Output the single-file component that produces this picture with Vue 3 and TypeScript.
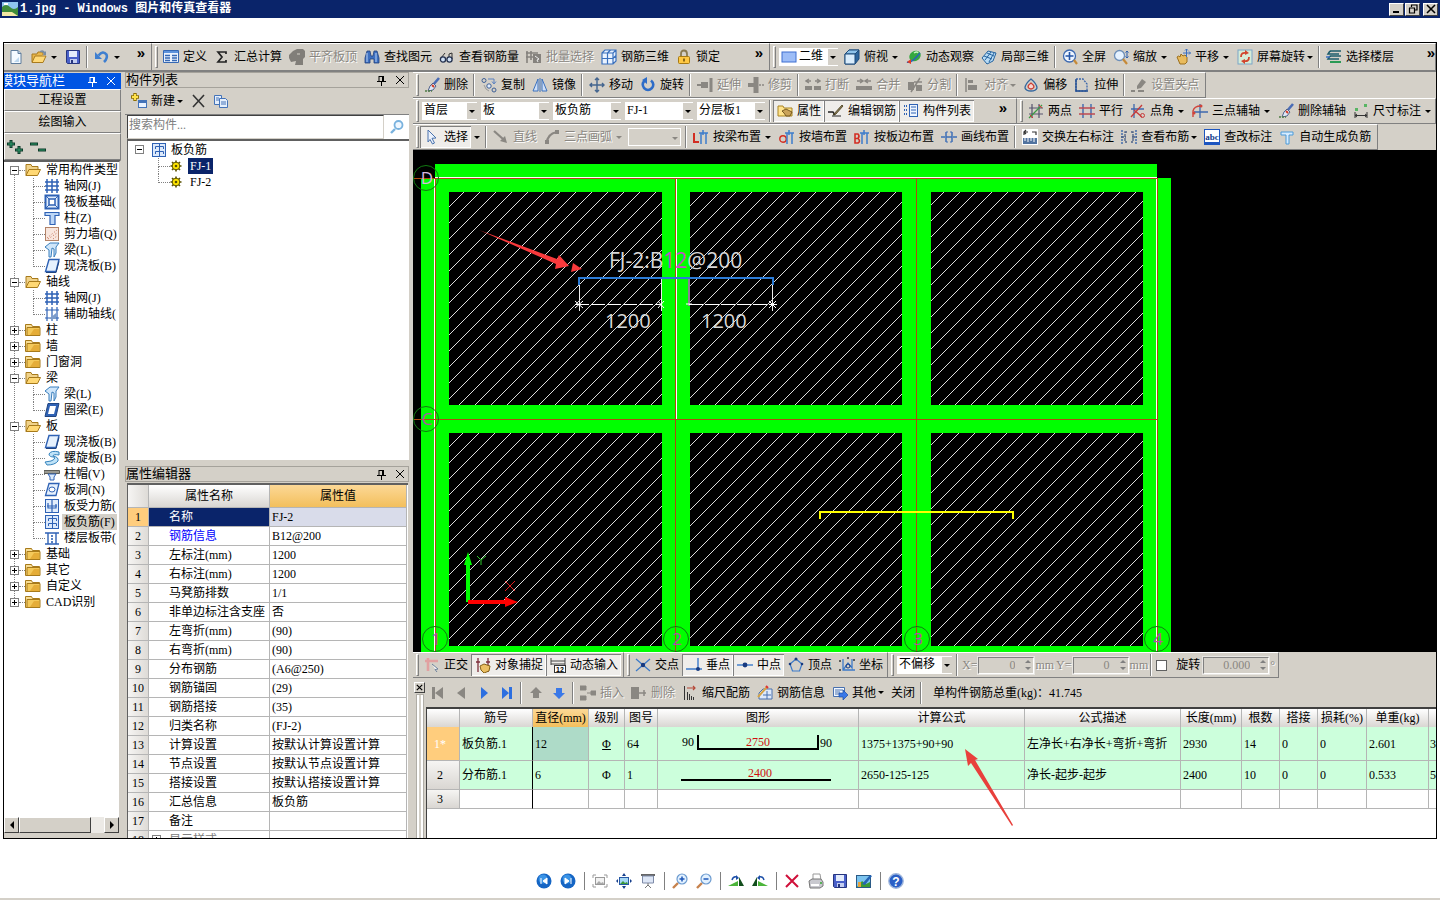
<script setup lang="ts">
import { h, type FunctionalComponent, type VNode } from 'vue'

type Kind = 'btn' | 'sep' | 'grip' | 'combo' | 'more' | 'drop'
interface Item {
  kind: Kind
  icon?: string
  label?: string
  off?: boolean
  on?: boolean
  arrow?: 'wide' | 'near'
  size?: string
}
interface Opt { off?: boolean; on?: boolean; arrow?: 'wide' | 'near' }
interface TreeNode { label: string; icon: string; open?: boolean; active?: boolean; children?: TreeNode[] }

const B = '#2f62b5'
const G = '#8a8782'
const icons: Record<string, string> = {
  fresh: '<path d="M3 1.5h7l3 3v10H3z" fill="#f4faff" stroke="#5f7d9c"/><path d="M10 1.5v3h3" fill="#b7cde2" stroke="#5f7d9c"/><path d="M11 8v5H6z" fill="#bcd7ee"/>',
  open: '<path d="M1 13V5h5l1-2h5v3" fill="#e9b64a" stroke="#a97b1e"/><path d="M1 13.5 4 7h11l-3 6.500z" fill="#ffd978" stroke="#a97b1e"/><path d="M9 2q3-2 5 1l1-1v4h-3l1-1q-1-2-4-2" fill="#7b8ea3"/>',
  save: '<path d="M1.500 1.500h13v13h-12l-1-1z" fill="#4960c9" stroke="#26357e"/><path d="M4 2h8v6H4z" fill="#e4ecfb"/><path d="M5 10h7v4H5z" fill="#c3cdf0"/><path d="M6 11h2v3H6z" fill="#26357e"/>',
  undo: '<path d="M4.500 6.500Q9 1 12.500 5.500 14 9 10 13" fill="none" stroke="#3f7fd0" stroke-width="2.600"/><path d="M1 3v7h7z" fill="#3f7fd0"/>',
  define: '<path d="M.5 1.500h15v12H.5z" fill="#eaf2fd" stroke="#3568b4"/><path d="M1 2h14v2H1z" fill="#5d93dc"/><path d="M2 6.500h5M2 9h5M2 11.500h5M9 6.500h5M9 9h5M9 11.500h5" stroke="#3568b4" stroke-width="1.300"/>',
  sigma: '<path d="M12 5V3H4l4 5-4 5h8v-2" fill="none" stroke="#222" stroke-width="1.700"/>',
  flush: '<path d="M0 9V6l4-4 4-2h6l2 2v6l-2 2v6H6l1-4-5 1z" fill="#817e79"/><path d="M8 5h3" stroke="#d4d0c8"/>',
  find: '<path d="M3 2h3l1 5h2l1-5h3l2 7v5h-5v-4H6v4H1V9z" fill="#3d6fc0" stroke="#213f7c" stroke-width=".8"/><path d="M3 4v9M12 4v9" stroke="#bcd4f4"/>',
  glasses: '<path d="M2 9 6 4M10 9V5l3-1v6" stroke="#333" fill="none"/><circle cx="4" cy="10.500" r="2.600" fill="#cfe0f5" stroke="#23304d" stroke-width="1.300"/><circle cx="10.500" cy="10.500" r="2.600" fill="#cfe0f5" stroke="#23304d" stroke-width="1.300"/>',
  batch: '<path d="M1 2v12M5 2v9M0 4h12M0 8h8" stroke="#85827d" stroke-width="1.600"/><path d="M7 5h8v9H7z" fill="#85827d"/><path d="m9 7 4 3-2 1 1 2" stroke="#eee" fill="none"/>',
  grid3d: '<path d="M1 4 4 1h11v11l-3 3H1V4h11v11M6.500 4v11M1 9.500h11M12 4l3-3M12 9.500l3-3M6.500 4l3-3" fill="#eaf3ff" stroke="#3a70bd" stroke-width="1.200"/>',
  lock: '<path d="M5 8V5q0-3.500 3-3.500T11 5v3" fill="none" stroke="#8a7a50" stroke-width="1.800"/><rect x="2.500" y="7.500" width="11" height="7" rx="1" fill="#ffc843" stroke="#a77a13"/><path d="M8 9.500v3" stroke="#6a4a07" stroke-width="1.500"/>',
  rect: '<rect x="1" y="3" width="14" height="10" fill="#9dbdf7" stroke="#3e6fd0"/>',
  cube: '<path d="m1 5 4-4h10v9l-4 5H1z" fill="#2e659c" stroke="#1d4b7a"/><path d="m1 5 4-4h10l-4 4z" fill="#8fc3ea" stroke="#1d4b7a"/><path d="M1 5h10v10H1z" fill="#d9ecfb" stroke="#1d4b7a"/>',
  orbit: '<ellipse cx="9" cy="7" rx="6" ry="5" fill="#36a83f" transform="rotate(-35 9 7)"/><path d="M1 13Q5 15 14 4" fill="none" stroke="#2b63b5" stroke-width="1.500"/><path d="M8 4q3-2 4 0" stroke="#c7f3c0" stroke-width="1.500" fill="none"/><path d="m1 13 4-3v5z" fill="#e33a24"/>',
  local3d: '<path d="m1 9 6-7 8 2-3 8-6 3z" fill="#b9dcf5" stroke="#25639e"/><path d="m4 11 6-8M8 13l5-9M3 7l8 3M6 4l7 3" stroke="#25639e" fill="none"/>',
  fit: '<circle cx="7.500" cy="7" r="6" fill="#eef5ff" stroke="#3c69b0" stroke-width="1.300"/><path d="M7.500 3v8M3.500 7h8" stroke="#2454a6" stroke-width="1.600"/><path d="m12 11 3 4" stroke="#c68a38" stroke-width="2.200"/>',
  zoomi: '<circle cx="6.500" cy="6.500" r="5" fill="#e6f2ff" stroke="#6d8fb9" stroke-width="1.300"/><path d="m10 10 4 5" stroke="#c68a38" stroke-width="2.200"/><path d="M14 2v7M12.500 3.500 14 2l1.500 1.500M12.500 7.500 14 9l1.500-1.500" stroke="#2a5fb0" fill="none"/>',
  pan: '<path d="M2 8q2-2 3 0l1-3 2 2 2-1 2 2v5l-2 2H5z" fill="#e9bb5d" stroke="#9b6f1e"/><path d="M11.500 0v8M8 4h7.500M10 1.500 11.500 0 13 1.500M14 2.500 15.500 4 14 5.500" stroke="#3b6fc0" fill="none"/>',
  turn: '<rect x="1" y="1" width="14" height="14" fill="#d6ecd8" stroke="#7aa6c8"/><path d="M4 8q0-5 5-4M12 8q0 5-5 4" fill="none" stroke="#d2452e" stroke-width="1.800"/><path d="m8 1 4 3-4 2zM8 15l-4-3 4-2z" fill="#d2452e"/>',
  floors: '<path d="M4 2h11M4 2l-2 3h11M4 7h11M4 7l-2 3h11" stroke="#1d5c6b" stroke-width="1.500" fill="none"/><path d="M4 13h11" stroke="#2a9a55" stroke-width="2"/><path d="M0 8h4" stroke="#3b6fc0" stroke-width="1.500"/>',
  brush: '<path d="m15 1-6 7" stroke="#4a6cb5" stroke-width="2.600"/><path d="m9 6 3 3-3 4-5 1 2-5z" fill="#dfe7f6" stroke="#51628c"/><path d="m8 8 2 2" stroke="#d43a22" stroke-width="2"/><path d="M1 14h7" stroke="#4d7b43" stroke-width="1.300" stroke-dasharray="2 1"/>',
  copy: '<circle cx="3" cy="3.500" r="2" fill="none" stroke="#3d5f96"/><circle cx="8" cy="9" r="2.200" fill="#e4eefb" stroke="#3d5f96"/><circle cx="13" cy="13" r="2" fill="none" stroke="#3d5f96"/><path d="M7 2h6v4M11 4.500 13 7l2-2.500" fill="none" stroke="#5b81c0"/><path d="m3 8 2 4 3 2" stroke="#999" fill="none"/>',
  mirror: '<path d="M6 2v12H1zM10 2v12h5z" fill="#cfe0f8" stroke="#3a70bd"/><path d="M8 1v14" stroke="#3a70bd"/>',
  move: '<path d="M8 1v14M1 8h14M6 3l2-2 2 2M6 13l2 2 2-2M3 6 1 8l2 2M13 6l2 2-2 2" fill="none" stroke="#44658f" stroke-width="1.400"/>',
  rotate: '<path d="M5 3.500q-4 3-1 7.500 4 4 8 0 3-4-1-7.500" fill="none" stroke="#2d6cc8" stroke-width="2.500"/><path d="M7 0v7L2 3z" fill="#2d6cc8"/>',
  extend: `<path d="M14 1v14" stroke="${G}" stroke-width="3"/><path d="M0 8h4" stroke="${G}" stroke-width="2"/><path d="M4 5h7v6H4z" fill="${G}"/>`,
  trim: `<path d="M8 0v16" stroke="${G}" stroke-width="5"/><path d="M11 8h5" stroke="${G}" stroke-width="1.500" stroke-dasharray="2 1"/><path d="M0 6h6v4H0z" fill="${G}"/>`,
  brk: `<path d="M0 11h16" stroke="${G}" stroke-width="4" stroke-dasharray="7 2"/><path d="M2 4h4M10 4h5M4 2 1 4l3 2M12 2l3 2-3 2" stroke="${G}" fill="none" stroke-width="1.500"/>`,
  merge: `<path d="M0 11h16" stroke="${G}" stroke-width="4"/><path d="M1 4h5M10 4h5M4 2l3 2-3 2M12 2 9 4l3 2" stroke="${G}" fill="none" stroke-width="1.500"/>`,
  split: `<path d="M1 5h6v8H1zM9 8h6v6H9z" fill="${G}"/><path d="m4 15 9-14M7 5h8" stroke="${G}" stroke-width="1.500"/>`,
  align: `<path d="M2 1v14" stroke="${G}" stroke-width="1.500"/><path d="M4 3h5v3H4zM4 8h9v5H4z" fill="${G}"/>`,
  offset: '<path d="M8 2q6 5 6 9-1 3-6 3t-6-3q0-4 6-9z" fill="none" stroke="#35679e" stroke-width="1.300"/><path d="M8 6q3 2 3 4-1 2-3 2t-3-2q0-2 3-4z" fill="#f9d7d2" stroke="#cc3e33" stroke-width="1.300"/>',
  stretch: '<path d="M2 14V2h7l4 5v7z" fill="none" stroke="#3b66ab" stroke-width="1.300" stroke-dasharray="2 1"/><path d="M2 2v12h12" fill="none" stroke="#234d91" stroke-width="1.400"/>',
  grips: `<path d="m6 9 5-7 4 3-5 6-4 1z" fill="${G}"/><path d="M0 14h4M7 14h6" stroke="${G}" stroke-width="1.800"/>`,
  prop: '<path d="M1 12V3h5l1 2h8v8H1z" fill="#ffe38c" stroke="#a98423"/><path d="m5 8 4-2 6 3-2 4H9L7 10z" fill="#caa35a" stroke="#5e430d" stroke-width=".8"/>',
  edit: '<path d="M0 9h5l2 3" stroke="#222" stroke-width="1.400" fill="none"/><path d="m5 12 9-10 1 1-7 8z" fill="#8a7d55" stroke="#443a1c" stroke-width=".8"/><path d="M4 13h9" stroke="#222"/>',
  list: '<path d="M1 3h3M1 7h3M1 11h3" stroke="#2f62b5" stroke-width="2" stroke-dasharray="1 1"/><rect x="6.500" y="1.500" width="8" height="12" fill="#eef5ff" stroke="#2f62b5"/><path d="M8 4h5M8 7h5M8 10h5" stroke="#2f62b5"/>',
  twopt: '<path d="M4 1v14M11 1v14M1 5h14M1 11h14" stroke="#56546e" stroke-width="1.200"/><path d="m1 15 13-13" stroke="#3c9a42" stroke-width="1.300"/><path d="m2 12 3 3M11 2l3 3" stroke="#d33"/>',
  parallel: '<path d="M4 1v14M12 1v14" stroke="#3e68ae" stroke-width="1.400"/><path d="M0 5h16M0 11h16" stroke="#bd4951" stroke-width="1.400"/>',
  angle: '<path d="M4 1v14M1 6h13" stroke="#3e68ae" stroke-width="1.300"/><path d="M1 14 12 2M4 7l8 7" stroke="#c73a3a" stroke-width="1.300"/><circle cx="12.500" cy="12.500" r="2" fill="none" stroke="#c73a3a"/>',
  three: '<path d="M8 1v14M2 9h14" stroke="#3e68ae" stroke-width="1.300"/><path d="M1 14V8q1-5 8-5" fill="none" stroke="#d0433a" stroke-width="1.400"/><circle cx="2" cy="10" r="1.500" fill="#d0433a"/><circle cx="9" cy="3" r="1.500" fill="#d0433a"/>',
  dim: '<path d="M2 9v6M14 9v6M2 12.500h12M4 11l-2 1.500L4 14M12 11l2 1.500-2 1.500" fill="none" stroke="#333"/><path d="M2 5h3v3H2zM11 1h3v3h-3z" fill="#58b563"/>',
  cursor: '<path d="m4 1 8 8-4 .3 2.500 4.700-2 1L6 10.500 4 13z" fill="#eaf1fc" stroke="#4a73ae"/>',
  line: `<path d="m1 2 9 8" stroke="${G}" stroke-width="2.200"/><path d="M14 14 7 12l5-5z" fill="${G}"/>`,
  arc: `<path d="M3 14Q3 5 13 3" fill="none" stroke="${G}" stroke-width="2.200"/><path d="M1 11h4v4H1zM11 1h4v4h-4z" fill="${G}"/>`,
  beam: '<path d="M1 4v9h5" fill="none" stroke="#d22d22" stroke-width="2"/><path d="M6 4h9M8 4v11M13 4v11M10 1v5" stroke="#3d7ccb" stroke-width="1.500"/>',
  wall: '<circle cx="4" cy="10" r="3.200" fill="none" stroke="#d22d22" stroke-width="1.400"/><path d="M6 4h9M8 4v11M13 4v11M10 1v5" stroke="#3d7ccb" stroke-width="1.500"/>',
  edge: '<path d="M1 5v9h3q3-2 0-4.500Q6 7 4 5zM1 9.500h3" fill="none" stroke="#d22d22" stroke-width="1.600"/><path d="M6 4h9M8 4v11M13 4v11M10 1v5" stroke="#3d7ccb" stroke-width="1.500"/>',
  drawline: '<path d="M5 3v10M11 3v10M0 8h4M5 8h6M12 8h4" stroke="#3e6fb7" stroke-width="1.500"/><path d="M5 3h2M9 3h2M5 13h2M9 13h2" stroke="#3e6fb7"/>',
  swap: '<path d="M0 0h16v16H0z" fill="#fff"/><path d="M2 6V3h4M14 6V3h-4M4 1 2 3l2 2" fill="none" stroke="#333" stroke-width="1.200"/><path d="M1 9h14v6H1z" fill="#51739f"/><path d="M3 9v3M6 9v4M9 9v3M12 9v4" stroke="#fff"/>',
  view: '<path d="M1 1v14M15 1v14" stroke="#3b66ab" stroke-dasharray="2 1" stroke-width="1.400"/><path d="M6 3H4v10h2M10 3h2v10h-2M0 8h5M11 8h5" fill="none" stroke="#4a5f85" stroke-width="1.300" stroke-dasharray="3 1"/>',
  abc: '<rect x=".5" y=".5" width="15" height="15" fill="#fff" stroke="#1d55c0"/><path d="M1 14h14" stroke="#1d55c0" stroke-width="2"/><text x="8" y="11" font-size="9" font-weight="bold" text-anchor="middle" font-family="Liberation Serif, serif" fill="#123a8c">abc</text>',
  tee: '<path d="M2 3h12v3h-4v9H7V6H2z" fill="#d7ecff" stroke="#4b9ad8"/>',
  ortho: '<path d="M4 1v13M1 4h13" stroke="#e1a1a1" stroke-width="2.600"/><path d="m8 7 6 5-3 .5 2 2.500" fill="#fff" stroke="#6b7f9b"/>',
  osnap: '<path d="M3 1v14M13 1v14M1 5h4M11 5h4" stroke="#7c2e3a" stroke-width="1.300"/><path d="m5 9 4-2 6 2-1 5-5 2-3-3z" fill="#eabf63" stroke="#856017"/>',
  dyn: '<path d="M1 1v7M15 1v7M1 4h14M1 7h14" stroke="#444"/><rect x="4.500" y="8.500" width="11" height="7" fill="#fff" stroke="#333"/><text x="10" y="15" font-size="7" font-weight="bold" text-anchor="middle" font-family="Liberation Sans, sans-serif">12</text>',
  cross: '<path d="m1 2 14 12M15 2 1 14" stroke="#3c7ac9" stroke-width="1.300"/><circle cx="8" cy="8" r="2.200" fill="#173a80"/>',
  perp: '<path d="M12 1v11M0 12h16" stroke="#3c7ac9" stroke-width="1.400"/><circle cx="12" cy="12" r="2" fill="#173a80"/>',
  mid: '<path d="M0 8h16" stroke="#3c7ac9" stroke-width="1.400"/><circle cx="8" cy="8" r="2.400" fill="#173a80"/>',
  vertex: '<path d="m8 2 6 5-2.500 7h-7L2 7z" fill="none" stroke="#3c7ac9" stroke-width="1.200"/><circle cx="8" cy="2" r="1.500" fill="#173a80"/><circle cx="2" cy="7" r="1.300" fill="#173a80"/><circle cx="14" cy="7" r="1.300" fill="#173a80"/>',
  coord: '<path d="M4 2v11h12M4 13l5-7 4 5V2" fill="none" stroke="#3c7ac9" stroke-width="1.300"/><path d="M0 4h2M0 13h2M8 1h2M14 3h2" stroke="#333" stroke-width="1.500"/><circle cx="9" cy="9" r="2" fill="none" stroke="#173a80"/>',
  first: `<path d="M2 2h3v12H2zM13 2v12L5 8z" fill="${G}"/>`,
  prev: `<path d="M12 2v12L4 8z" fill="${G}"/>`,
  next: '<path d="M5 2v12l7-6z" fill="#2d6fe0"/>',
  last: '<path d="M3 2v12l7-6zM10 2h3v12h-3z" fill="#2d6fe0"/>',
  up: `<path d="m8 2 6 6h-3v5H5V8H2z" fill="${G}"/>`,
  down: '<path d="m8 14 6-6h-3V3H5v5H2z" fill="#3a78e8"/>',
  insert: `<path d="M0 1h6v4H0zM0 11h6v4H0zM11 6h5v4h-5zM7 8h4" fill="${G}" stroke="${G}"/>`,
  remove: `<path d="M0 2h8v12H0z" fill="${G}"/><path d="M8 8h7M13 5v6" stroke="${G}" stroke-width="1.500"/>`,
  scale: '<path d="M5 3h8M11 1l2 2-2 2" fill="none" stroke="#b54737" stroke-width="1.200"/><path d="M2.500 1v14M5.500 7v8M7.500 9v6M9.500 11v4M11.500 12v3" stroke="#333"/>',
  info: '<path d="M6 4h9v10H2V8z" fill="#dfeafa" stroke="#4870ae"/><path d="m1 12 9-10" stroke="#d5a446" stroke-width="2"/><path d="M6 10h8M10 6v8" stroke="#4870ae"/><path d="m9 1 2 2" stroke="#d33" stroke-width="2"/>',
  other: '<path d="M1.500 2.500h11v9h-11z" fill="#f2f7ff" stroke="#4870ae"/><path d="M3 5h8M3 7h5M3 9h4" stroke="#4870ae"/><path d="M7 8h4V5l5 5-5 5v-3H7z" fill="#3a78e8" stroke="#1e4da3" stroke-width=".7"/>',
  folder: '<path d="M.5 2.500h6l1 2h7v9H.5z" fill="#f7dd95" stroke="#a77a1b"/><path d="M2 5.500h13v8H2z" fill="#f4c95a" stroke="#a77a1b"/><path d="M9 7h5v6H5z" fill="#e5ad38"/>',
  folderOpen: '<path d="M1 13.500V2.500h5l1 2h6v3" fill="#f0d28a" stroke="#a77a1b"/><path d="m1 13.500 3-6h11.500l-3 6z" fill="#ffd874" stroke="#a77a1b"/>',
  axis: `<path d="M3 1v14M8 1v14M13 1v14M1 4h14M1 8h14M1 12h14" stroke="${B}" stroke-width="1.500"/>`,
  raft: `<rect x="1.500" y="1.500" width="13" height="13" fill="#e3eefc" stroke="${B}" stroke-width="2"/><rect x="5" y="5" width="6" height="6" fill="#fff" stroke="${B}" stroke-width="1.500"/><path d="m2 2 3 3M14 2l-3 3M2 14l3-3M14 14l-3-3" stroke="${B}"/>`,
  column: `<path d="M1 2.500h14v3h-4v9H6v-9H1z" fill="#bcd6f6" stroke="${B}" stroke-width="1.200"/>`,
  shear: '<rect x="1.500" y="1.500" width="13" height="13" fill="#f8e6dd" stroke="#b38368"/><path d="M3 12 13 4M4 13l9-6M9 13l4-3" stroke="#c26b52" stroke-dasharray="1 2"/>',
  beamI: '<path d="M1 5 6 1h9l-3 4v6l-2 4V7L8 6l-1 9H5V8z" fill="#cfe6fa" stroke="#3a7fbd"/>',
  slab: `<path d="M5 1.500h10l-3 12H1.500z" fill="#e6f1fd" stroke="${B}" stroke-width="1.400"/><path d="M2 14.500h10l3-11" stroke="#214580" fill="none"/>`,
  aux: `<path d="M3 1v14M8 1v14M13 1v14M1 4h14M1 12h14" stroke="${B}" stroke-width="1.200"/><path d="m5 13 7-6v6z" fill="#7d9cc9"/>`,
  ring: `<path d="M4 1.500h11l-3 13H1z" fill="${B}" stroke="#214580"/><path d="M6 4h6l-2 8H4z" fill="#fff"/>`,
  spiral: '<path d="M15 2q-8-2-10 2 0 3 5 3 2 2-3 4l-6 1 2 3q8 0 11-4 1-4-5-5 0-2 6-1z" fill="#bfe3f8" stroke="#3583bd"/>',
  cap: '<path d="M0 4.500h15.500v3H0z" fill="#9a9a92" stroke="#5e5e58"/><path d="m4 8 2 3v3h4v-3l2-3z" fill="#dcebfb" stroke="#2f62b5"/>',
  hole: `<path d="M5 1.500h10l-3 12H1.500z" fill="#e6f1fd" stroke="${B}" stroke-width="1.300"/><ellipse cx="8" cy="7.500" rx="3" ry="2.500" fill="#fff" stroke="${B}"/>`,
  rebar: `<rect x="1.500" y="1.500" width="13" height="13" fill="#e3eefc" stroke="${B}"/><path d="M8 2v12M3 8h10M4 5v5h8V6" fill="none" stroke="${B}" stroke-width="1.200"/>`,
  neg: `<rect x="1.500" y="1.500" width="13" height="13" fill="#dce9fb" stroke="${B}"/><path d="M8.500 2v12M4.500 7V4.500h8V7M4.500 12V9.500h8V12" fill="none" stroke="${B}"/>`,
  strip: `<path d="M1 3h14M1 14h14M4 3v11M12 3v11" stroke="${B}" stroke-width="1.400"/><path d="M8 5v8" stroke="${B}" stroke-dasharray="2 1" stroke-width="1.600"/>`,
  gear: '<path d="M8 2.500v11M2.500 8h11M4 4l8 8M12 4l-8 8" stroke="#5b5200" stroke-width="1.600"/><circle cx="8" cy="8" r="3.800" fill="#ffe500" stroke="#5b5200"/><circle cx="8" cy="8" r="1.300" fill="#5b5200"/>',
  addnew: '<path d="M4 0v8M0 4h8" stroke="#8f7100" stroke-width="3.400"/><path d="M4 1v6M1 4h6" stroke="#ffe14a" stroke-width="2"/><rect x="7.500" y="7.500" width="8" height="7" fill="#eaf3ff" stroke="#4473b8"/><path d="M8 9h7" stroke="#4473b8" stroke-width="2"/>',
  cut: '<path d="m3 2 11 12M14 2 3 14" stroke="#333" stroke-width="1.600"/>',
  docs: '<path d="M1.500 2.500h7v9h-7z" fill="#e5effc" stroke="#4473b8"/><path d="M6.500 5.500h6l2 2v7h-8z" fill="#e5effc" stroke="#4473b8"/><path d="M3 5h3M3 7h3M8 9h5M8 11h5" stroke="#4473b8"/>',
  search: '<circle cx="9.500" cy="6" r="4" fill="#eff7ff" stroke="#79b2de" stroke-width="1.800"/><path d="m6 10-4 4" stroke="#79b2de" stroke-width="2.400"/>',
  pin: '<path d="M5 4v5M5 4.500h4M3 9.500h9M7.500 10v4" stroke="currentColor" fill="none"/><path d="M9 4v5" stroke="currentColor" stroke-width="2"/>',
  close: '<path d="m4 4 8 8M12 4l-8 8" stroke="currentColor" fill="none"/>',
  plusplus: '<path d="M4 1v8M0 5h8M12 7v8M8 11h8" stroke="#0e3a2a" stroke-width="3"/><path d="M4 2v6M1 5h6M12 8v6M9 11h6" stroke="#2f9c6b"/>',
  minus: '<path d="M0 5h8M8 11h8" stroke="#0e3a2a" stroke-width="3"/><path d="M1 5h6M9 11h6" stroke="#2f9c6b"/>',
  picture: '<path d="M0 1h16v14H0z" fill="#8fc4ee"/><path d="M0 6q4-4 8 0t8 0v9H0z" fill="#3f8c3a"/><path d="M0 11h10l6 4H0z" fill="#f1e7a4"/><path d="M2 2h4v2H2z" fill="#fff"/>',
  ballPrev: '<circle cx="8" cy="8" r="7.500" fill="#1565c4"/><circle cx="7" cy="6" r="4.500" fill="#3a93e6"/><path d="M5 5v6M11 5v6L7 8z" stroke="#fff" fill="#fff"/>',
  ballNext: '<circle cx="8" cy="8" r="7.500" fill="#1565c4"/><circle cx="7" cy="6" r="4.500" fill="#3a93e6"/><path d="M11 5v6M5 5v6l4-3z" stroke="#fff" fill="#fff"/>',
  actual: '<path d="M1 5V2h3M12 2h3v3M15 11v3h-3M4 14H1v-3" fill="none" stroke="#999"/><rect x="3.500" y="4.500" width="9" height="7" fill="#f2f2f2" stroke="#999"/><path d="m4 11 3-3 2 2 2-1 1 2z" fill="#aaa"/>',
  best: '<rect x="3.500" y="4.500" width="9" height="7" fill="#a6d8f5" stroke="#2759a5"/><path d="m4 11 3-3 2 2 2-1 1 2z" fill="#3d9a3a"/><path d="M6 3h4L8 0zM6 13h4l-2 3zM2 6v4L0 8zM14 6v4l2-2z" fill="#163f8c"/>',
  slide: '<path d="M1 2h14" stroke="#666" stroke-width="2"/><path d="M2.500 3h11v7h-11z" fill="#dde6f6" stroke="#7e8ba8"/><path d="M8 10v3M5 15l3-3 3 3" stroke="#777" fill="none"/>',
  zin: '<path d="m6 10-5 5" stroke="#c7824d" stroke-width="2.400"/><circle cx="10" cy="6" r="5" fill="#e2f1ff" stroke="#6c9bd0" stroke-width="1.200"/><path d="M10 3.500v5M7.500 6h5" stroke="#1c56b8" stroke-width="1.500"/>',
  zout: '<path d="m6 10-5 5" stroke="#c7824d" stroke-width="2.400"/><circle cx="10" cy="6" r="5" fill="#e2f1ff" stroke="#6c9bd0" stroke-width="1.200"/><path d="M7.500 6h5" stroke="#1c56b8" stroke-width="1.500"/>',
  rleft: '<path d="M11 13V4l5 9z" fill="#124d1c"/><path d="m0 13 10-5v5z" fill="#4cb53a"/><path d="M4 7q1-4 5-3" stroke="#1c4fa8" fill="none" stroke-width="1.500"/><path d="m8 2 3 3-3 2z" fill="#1c4fa8"/>',
  rright: '<path d="M5 13V4l-5 9z" fill="#124d1c"/><path d="M16 13 6 8v5z" fill="#4cb53a"/><path d="M12 7q-1-4-5-3" stroke="#1c4fa8" fill="none" stroke-width="1.500"/><path d="M8 2 5 5l3 2z" fill="#1c4fa8"/>',
  redx: '<path d="m2 2 12 12M14 2 2 14" stroke="#d0103a" stroke-width="2"/>',
  print: '<path d="M5 1h7l1 6H5z" fill="#fff" stroke="#999"/><path d="m1 8 3-2h9l2 3v4l-3 2H2z" fill="#c9c9cf" stroke="#777"/><path d="M3 12h8" stroke="#fff" stroke-width="2"/><path d="M12 10h2" stroke="#3a3" stroke-width="1.500"/>',
  editpic: '<rect x=".5" y="2.500" width="14" height="12" fill="#7cc4ef" stroke="#2a5a86"/><path d="m1 14 5-6 4 3 4-2v5z" fill="#3b9a36"/><path d="m6 11 8-9 2 1-7 9z" fill="#2563b5"/><path d="M2 9h3v5H2z" fill="#e8a33a"/>',
  help: '<circle cx="8" cy="8" r="7.200" fill="#2a5fc6" stroke="#9fb6dc" stroke-width="1.400"/><text x="8" y="12.500" font-size="12" font-weight="bold" fill="#fff" text-anchor="middle" font-family="Liberation Sans, sans-serif">?</text>',
}

const b = (icon: string, label = '', o: Opt = {}): Item => ({ kind: 'btn', icon, label, ...o })
const sep: Item = { kind: 'sep' }
const grip: Item = { kind: 'grip' }
const more: Item = { kind: 'more' }
const drop: Item = { kind: 'drop' }
const combo = (label: string, size = 'mid', icon = ''): Item => ({ kind: 'combo', label, size, icon })

const glyph = (name: string): VNode =>
  h('svg', { class: 'ico', viewBox: '0 0 16 16', 'aria-hidden': 'true', innerHTML: icons[name] })

const Tools: FunctionalComponent<{ items: Item[] }> = (props) =>
  props.items.map((it) => {
    if (it.kind === 'sep') return h('span', { class: 'tb-sep' })
    if (it.kind === 'grip') return h('span', { class: 'tb-grip' })
    if (it.kind === 'more') return h('button', { class: 'tb-more', 'aria-label': '更多' }, '»')
    if (it.kind === 'drop') return h('button', { class: 'tb-drop', 'aria-label': '展开' }, [h('i', { class: 'tri' })])
    if (it.kind === 'combo')
      return h('span', { class: ['tb-combo', it.size] }, [
        it.icon ? glyph(it.icon) : null,
        h('select', { 'aria-label': it.label || '选项', disabled: it.size === 'blank' }, [h('option', it.label)]),
        h('i', { class: 'tri' }),
      ])
    return h(
      'button',
      { class: ['tb-btn', { on: it.on }], disabled: it.off, 'aria-label': it.label || it.icon },
      [
        it.icon ? glyph(it.icon) : null,
        it.label ? h('span', it.label) : null,
        it.arrow ? h('i', { class: ['tri', it.arrow] }) : null,
      ],
    )
  })
Tools.props = ['items']

const wide: Opt = { arrow: 'wide' }
const off: Opt = { off: true }
const on: Opt = { on: true }

const fileBand = [b('fresh'), b('open', '', wide), b('save'), sep, b('undo', '', wide), more]
const mainBand = [grip, b('define', '定义'), b('sigma', '汇总计算'), b('flush', '平齐板顶', off), b('find', '查找图元'), b('glasses', '查看钢筋量'), b('batch', '批量选择', off), b('grid3d', '钢筋三维'), b('lock', '锁定'), more]
const viewBand = [grip, combo('二维', 'view', 'rect'), b('cube', '俯视', wide), b('orbit', '动态观察'), b('local3d', '局部三维'), sep, b('fit', '全屏'), b('zoomi', '缩放', wide), b('pan', '平移', wide), b('turn', '屏幕旋转', { arrow: 'near' }), sep, b('floors', '选择楼层'), more]
const editBand = [grip, b('brush', '删除'), sep, b('copy', '复制'), b('mirror', '镜像'), sep, b('move', '移动'), b('rotate', '旋转'), sep, b('extend', '延伸', off), b('trim', '修剪', off), sep, b('brk', '打断', off), b('merge', '合并', off), b('split', '分割', off), sep, b('align', '对齐', { off: true, arrow: 'near' }), b('offset', '偏移'), b('stretch', '拉伸'), sep, b('grips', '设置夹点', off)]
const pickBand = [grip, combo('首层', 'small'), combo('板'), combo('板负筋'), combo('FJ-1'), combo('分层板1'), sep, b('prop', '属性', on), b('edit', '编辑钢筋', on), b('list', '构件列表', on), more]
const axisBand = [grip, b('twopt', '两点'), b('parallel', '平行'), b('angle', '点角', wide), b('three', '三点辅轴', wide), b('brush', '删除辅轴'), b('dim', '尺寸标注', wide)]
const drawBand = [grip, b('cursor', '选择', on), drop, sep, b('line', '直线', off), b('arc', '三点画弧', { off: true, arrow: 'wide' }), combo('', 'blank'), sep, b('beam', '按梁布置', wide), b('wall', '按墙布置'), b('edge', '按板边布置'), b('drawline', '画线布置'), sep, b('swap', '交换左右标注'), b('view', '查看布筋', { arrow: 'near' }), b('abc', '查改标注'), b('tee', '自动生成负筋')]
const snapBand = [grip, b('ortho', '正交'), b('osnap', '对象捕捉', on), b('dyn', '动态输入', on)]
const pointBand = [grip, b('cross', '交点'), b('perp', '垂点', on), b('mid', '中点', on), b('vertex', '顶点'), b('coord', '坐标')]
const offsetBand = [grip, combo('不偏移', 'small'), sep]
const rowBand = [b('first', '', off), b('prev', '', off), b('next'), b('last'), sep, b('up', '', off), b('down'), sep, b('insert', '插入', off), b('remove', '删除', off), b('scale', '缩尺配筋'), b('info', '钢筋信息'), b('other', '其他', { arrow: 'near' }), b('', '关闭'), sep]
const partBand = [b('addnew', '新建', { arrow: 'near' }), b('cut'), b('docs')]

const n = (icon: string, label: string, active = false): TreeNode => ({ icon, label, active })
const tree: TreeNode[] = [
  { label: '常用构件类型', icon: 'folderOpen', open: true, children: [n('axis', '轴网(J)'), n('raft', '筏板基础('), n('column', '柱(Z)'), n('shear', '剪力墙(Q)'), n('beamI', '梁(L)'), n('slab', '现浇板(B)')] },
  { label: '轴线', icon: 'folderOpen', open: true, children: [n('axis', '轴网(J)'), n('aux', '辅助轴线(')] },
  n('folder', '柱'),
  n('folder', '墙'),
  n('folder', '门窗洞'),
  { label: '梁', icon: 'folderOpen', open: true, children: [n('beamI', '梁(L)'), n('ring', '圈梁(E)')] },
  { label: '板', icon: 'folderOpen', open: true, children: [n('slab', '现浇板(B)'), n('spiral', '螺旋板(B)'), n('cap', '柱帽(V)'), n('hole', '板洞(N)'), n('rebar', '板受力筋('), n('neg', '板负筋(F)', true), n('strip', '楼层板带(')] },
  n('folder', '基础'),
  n('folder', '其它'),
  n('folder', '自定义'),
  n('folder', 'CAD识别'),
]

const attrs: [string, string][] = [
  ['名称', 'FJ-2'], ['钢筋信息', 'B12@200'], ['左标注(mm)', '1200'], ['右标注(mm)', '1200'], ['马凳筋排数', '1/1'],
  ['非单边标注含支座', '否'], ['左弯折(mm)', '(90)'], ['右弯折(mm)', '(90)'], ['分布钢筋', '(A6@250)'], ['钢筋锚固', '(29)'],
  ['钢筋搭接', '(35)'], ['归类名称', '(FJ-2)'], ['计算设置', '按默认计算设置计算'], ['节点设置', '按默认节点设置计算'],
  ['搭接设置', '按默认搭接设置计算'], ['汇总信息', '板负筋'], ['备注', ''],
]

const heads = ['筋号', '直径(mm)', '级别', '图号', '图形', '计算公式', '公式描述', '长度(mm)', '根数', '搭接', '损耗(%)', '单重(kg)', '']
const cols = ['c33', 'c73', 'c56', 'c36', 'c33', 'c201', 'c166', 'c156', 'c61', 'c38', 'c38', 'c49', 'c62', '']

const viewerTools: string[][] = [['ballPrev', 'ballNext'], ['actual', 'best', 'slide'], ['zin', 'zout'], ['rleft', 'rright'], ['redx', 'print', 'save', 'editpic'], ['help']]

const cellX = [449, 690, 931]
const cellY = [192, 433]
const hatch = Array.from({ length: 75 }, (_, i) => {
  const c = 656 + i * 16
  return `M${c - 192} 192L${c - 646} 646`
}).join('')
const bubbles = [
  { x: 426, y: 178, t: 'D' }, { x: 426, y: 419, t: 'C' }, { x: 435, y: 639, t: '1' },
  { x: 676, y: 639, t: '2' }, { x: 917, y: 639, t: '3' }, { x: 1157, y: 639, t: '4' },
]
</script>

<template>
  <div class="viewer">
    <header class="title">
      <svg class="ico" viewBox="0 0 16 16" v-html="icons.picture" />
      <h1>1.jpg - Windows <span>图片和传真查看器</span></h1>
      <div class="winbtns">
        <button aria-label="最小化"><svg viewBox="0 0 10 10"><path d="M1 8h6" stroke="#000" stroke-width="2" /></svg></button>
        <button aria-label="还原"><svg viewBox="0 0 10 10"><path d="M3.500 1v2M3 1h6v5H7M1 4h6M1.500 4v5h5V4" fill="none" stroke="#000" stroke-width="1.200" /></svg></button>
        <button aria-label="关闭"><svg viewBox="0 0 10 10"><path d="m1 1 8 8M9 1 1 9" stroke="#000" stroke-width="1.600" /></svg></button>
      </div>
    </header>

    <main class="shot">
      <div class="row top">
        <div class="band file"><Tools :items="fileBand" /></div>
        <div class="band main"><Tools :items="mainBand" /></div>
        <div class="band grow"><Tools :items="viewBand" /></div>
      </div>

      <div class="work">
        <nav class="nav">
          <div class="cap blue"><span class="clip">模块导航栏</span><svg class="ico" viewBox="0 0 16 16" v-html="icons.pin" /><svg class="ico" viewBox="0 0 16 16" v-html="icons.close" /></div>
          <button class="navbtn">工程设置</button>
          <button class="navbtn">绘图输入</button>
          <div class="fold">
            <button aria-label="全部展开"><svg class="ico" viewBox="0 0 16 16" v-html="icons.plusplus" /></button>
            <button aria-label="全部折叠"><svg class="ico" viewBox="0 0 16 16" v-html="icons.minus" /></button>
          </div>
          <div class="treebox">
            <ul class="tree">
              <li v-for="(g, i) in tree" :key="i">
                <div class="node"><i class="exp" :class="{ plus: !g.open }" /><i class="dots" /><svg class="ico" viewBox="0 0 16 16" v-html="icons[g.icon]" /><span>{{ g.label }}</span></div>
                <ul v-if="g.children">
                  <li v-for="c in g.children" :key="c.label" class="leaf"><svg class="ico" viewBox="0 0 16 16" v-html="icons[c.icon]" /><span :class="{ active: c.active }">{{ c.label }}</span></li>
                </ul>
              </li>
            </ul>
          </div>
          <div class="hscroll"><button aria-label="向左"><i class="tri left" /></button><span class="thumb" /><span class="track" /><button aria-label="向右"><i class="tri right" /></button></div>
        </nav>

        <section class="side">
          <div class="cap"><span class="clip">构件列表</span><svg class="ico" viewBox="0 0 16 16" v-html="icons.pin" /><svg class="ico" viewBox="0 0 16 16" v-html="icons.close" /></div>
          <div class="partbar"><Tools :items="partBand" /></div>
          <div class="find"><input type="text" placeholder="搜索构件..." aria-label="搜索构件" /><button aria-label="搜索"><svg class="ico" viewBox="0 0 16 16" v-html="icons.search" /></button></div>
          <div class="parts">
            <div class="node"><i class="exp" /><svg class="ico" viewBox="0 0 16 16" v-html="icons.neg" /><span>板负筋</span></div>
            <ul>
              <li class="leaf"><svg class="ico" viewBox="0 0 16 16" v-html="icons.gear" /><span class="sel">FJ-1</span></li>
              <li class="leaf"><svg class="ico" viewBox="0 0 16 16" v-html="icons.gear" /><span>FJ-2</span></li>
            </ul>
          </div>
          <div class="cap"><span class="clip">属性编辑器</span><svg class="ico" viewBox="0 0 16 16" v-html="icons.pin" /><svg class="ico" viewBox="0 0 16 16" v-html="icons.close" /></div>
          <div class="propbox">
            <table class="props">
              <thead><tr><th class="num" /><th class="name">属性名称</th><th class="hot">属性值</th></tr></thead>
              <tbody>
                <tr v-for="(p, i) in attrs" :key="i" :class="{ cur: i === 0, key: i === 1 }"><th class="num">{{ i + 1 }}</th><td class="name">{{ p[0] }}</td><td>{{ p[1] }}</td></tr>
                <tr class="group"><th class="num">18</th><td class="name"><i class="exp plus" />显示样式</td><td /></tr>
              </tbody>
            </table>
          </div>
        </section>

        <section class="right">
          <div class="row"><div class="band"><Tools :items="editBand" /></div></div>
          <div class="row"><div class="band pick"><Tools :items="pickBand" /></div><div class="band grow"><Tools :items="axisBand" /></div></div>
          <div class="row"><div class="band"><Tools :items="drawBand" /></div></div>

          <div class="canvas">
            <svg viewBox="413 150 1023 502" preserveAspectRatio="xMinYMin slice">
              <defs>
                <clipPath id="cells"><template v-for="y in cellY" :key="y"><rect v-for="x in cellX" :key="x" :x="x" :y="y" :width="x === 690 ? 212 : 213" height="213" /></template></clipPath>
              </defs>
              <path :d="hatch" clip-path="url(#cells)" stroke="#dcdcdc" stroke-width="1" shape-rendering="crispEdges" fill="none" />
              <path d="M435 164h722v28H435zM421 178h28v474h-28zM662 178h28v474h-28zM902 178h29v474h-29zM1143 178h28v474h-28zM421 405h750v28H421zM421 646h750v6H421z" fill="#00ff00" />
              <g shape-rendering="crispEdges" fill="none">
                <path d="M435 177.500h722M434.500 178v474M676.500 178v241M1156.500 178v474" stroke="#fff" />
                <path d="M413 178.500h744M435.500 178v474M675.500 178v474M916.500 178v474M1157.500 178v474M413 419.500h744" stroke="#b04a10" />
              </g>
              <g fill="none" stroke="#117a11"><circle v-for="c in bubbles" :key="c.t" :cx="c.x" :cy="c.y" r="12.500" /></g>
              <text v-for="c in bubbles" :key="c.t" :x="c.x + 1" :y="c.y + 6" class="bub" :class="{ pale: c.t === 'D' }">{{ c.t }}</text>

              <text x="609" y="268" class="cad big">FJ-2:B<tspan fill="#c050c8">12</tspan>@200</text>
              <text x="605" y="328" class="cad">1200</text>
              <text x="701" y="328" class="cad">1200</text>
              <path d="M579.500 285v26M661.500 279v32M772.500 285v26" stroke="#eee" fill="none" />
              <path d="M689 279v27" stroke="#c050c8" fill="none" stroke-width="1.500" />
              <path d="M575 304.500h87M689 304.500h88" stroke="#fff" stroke-dasharray="14 2" />
              <path d="m575 301 8 7M583 301l-8 7M658 301l6 7M664 301l-6 7M769 301l7 7M776 301l-7 7M686 304h6" stroke="#fff" />
              <path d="M579 285v-7h194v7" fill="none" stroke="#2b7bd6" stroke-width="2" />
              <path d="m479 230 78 29 2-4 10 11-14 3 1-5z" fill="#f8393c" />
              <path d="m573 263 9 6-11 3z" fill="#f8393c" />
              <path d="M820 519v-7h193v7" fill="none" stroke="#ffff00" stroke-width="2" />
              <path d="M468 602v-40" stroke="#00ff00" stroke-width="4" /><path d="m468 552 4 13h-8z" fill="#00ff00" />
              <path d="M468 602h40" stroke="#f00" stroke-width="4" /><path d="m518 602-13-5v10z" fill="#f00" />
              <path d="m477 556 4 4 5-4M481 560v5" stroke="#2bc42b" fill="none" /><path d="m505 581 10 10M515 581l-10 10" stroke="#e22020" />
            </svg>
          </div>

          <div class="row">
            <div class="band snap"><Tools :items="snapBand" /></div>
            <div class="band point"><Tools :items="pointBand" /></div>
            <div class="band offs">
              <Tools :items="offsetBand" />
              <label class="dis">X=<span class="spin"><input type="text" value="0" disabled /><i class="ud" /></span>mm</label>
              <label class="dis">Y=<span class="spin"><input type="text" value="0" disabled /><i class="ud" /></span>mm</label>
              <Tools :items="[sep]" />
              <label class="chk"><input type="checkbox" />旋转</label>
              <label class="dis"><span class="spin long"><input type="text" value="0.000" disabled aria-label="旋转角度" /><i class="ud" /></span>°</label>
            </div>
          </div>

          <div class="dock">
            <div class="gutter"><button aria-label="关闭"><svg viewBox="0 0 10 10"><path d="m2 2 6 6M8 2 2 8" stroke="#000" stroke-width="1.300" /></svg></button><span /></div>
            <div class="sheet">
              <div class="rowbar"><Tools :items="rowBand" /><span class="total">单构件钢筋总重(kg)：41.745</span></div>
              <div class="gridbox">
                <table class="grid">
                  <colgroup><col v-for="(c, i) in cols" :key="i" :class="c" /></colgroup>
                  <thead><tr><th /><th v-for="(t, i) in heads" :key="i" :class="{ hot: i === 1 }">{{ t }}</th></tr></thead>
                  <tbody>
                    <tr class="g r1">
                      <th class="cur">1*</th><td>板负筋.1</td><td class="cell">12</td><td class="mid"><u>Φ</u></td><td>64</td>
                      <td class="shape"><svg viewBox="0 0 200 33"><path d="M40 8v14h120V8" fill="none" stroke="#000" stroke-width="2" /><text x="24" y="19">90</text><text x="162" y="20">90</text><text x="88" y="19" class="red">2750</text></svg></td>
                      <td>1375+1375+90+90</td><td>左净长+右净长+弯折+弯折</td><td>2930</td><td>14</td><td>0</td><td>0</td><td>2.601</td><td>3</td>
                    </tr>
                    <tr class="g r2">
                      <th>2</th><td>分布筋.1</td><td>6</td><td class="mid">Φ</td><td>1</td>
                      <td class="shape"><svg viewBox="0 0 200 28"><path d="M23 19h150" stroke="#000" stroke-width="2" /><text x="90" y="16" class="red">2400</text></svg></td>
                      <td>2650-125-125</td><td>净长-起步-起步</td><td>2400</td><td>10</td><td>0</td><td>0</td><td>0.533</td><td>5</td>
                    </tr>
                    <tr class="r3"><th>3</th><td v-for="i in 13" :key="i" /></tr>
                  </tbody>
                </table>
                <svg class="pointer" viewBox="0 0 50 80"><path d="M1 0 14 10l-3 1 38 65-1 1L7 14l-3 3z" fill="#e8403c" /></svg>
              </div>
            </div>
          </div>
        </section>
      </div>
    </main>

    <footer class="foot">
      <div v-for="(g, i) in viewerTools" :key="i" class="fgroup"><button v-for="t in g" :key="t" :aria-label="t"><svg class="ico" viewBox="0 0 16 16" v-html="icons[t]" /></button></div>
    </footer>
  </div>
</template>

<style>
body { margin: 0; background: #fff; }
.viewer, .viewer button, .viewer input, .viewer select { font-family: "Liberation Serif", "Noto Sans CJK SC", serif; font-size: 12px; line-height: 16px; color: #000; }
.viewer button { border: 0; background: none; padding: 0; color: inherit; }
.viewer * { box-sizing: border-box; }
.ico { width: 16px; height: 16px; flex: none; display: block; }
.tri { flex: none; width: 0; height: 0; border: 3px solid transparent; border-top-color: currentColor; border-bottom: 0; }
.tri.wide { margin: 0 1px 0 4px; }
.tri.near { margin: 0 0 0 2px; }
.viewer .tb-btn { display: flex; align-items: center; height: 22px; flex: none; padding: 0 3px 0 4px; white-space: nowrap; }
.tb-btn > .ico + span { margin-left: 4px; }
.viewer .tb-btn:disabled { color: #8a8782; text-shadow: 1px 1px #fff; }
.viewer .tb-btn.on { background: #efedea; box-shadow: inset 1px 1px #808080, inset -1px -1px #fff; }
.tb-sep { flex: none; width: 2px; height: 22px; margin: 0 2px; border-left: 1px solid #808080; border-right: 1px solid #fff; }
.tb-grip { flex: none; width: 3px; height: 22px; margin: 0 1px 0 3px; border: 1px solid; border-color: #fff #808080 #808080 #fff; }
.viewer .tb-more { margin-left: auto; align-self: flex-start; padding: 0 6px 0 0; font: bold 15px/17px "Liberation Sans", sans-serif; }
.tb-drop { width: 12px; height: 22px; display: flex; align-items: center; justify-content: center; }
.tb-combo { flex: none; display: flex; align-items: center; background: #fff; height: 18px; margin: 0 2px; width: 68px; position: relative; }
.tb-combo.small { width: 55px; }
.tb-combo.view { width: 59px; padding-left: 2px; }
.tb-combo.blank { width: 53px; background: #d4d0c8; border: 1px solid #fff; color: #8a8782; }
.tb-combo select { appearance: none; border: 0; background: none; padding: 0 0 2px 2px; width: 100%; min-width: 0; height: 18px; }
.tb-combo .tri { position: absolute; right: 2px; top: 8px; z-index: 1; }
.tb-combo::after { content: ""; position: absolute; right: 0; top: 1px; bottom: 1px; width: 10px; background: #d4d0c8; }
</style>

<style scoped>
.viewer { height: 100vh; min-height: 700px; display: flex; flex-direction: column; overflow: hidden; }
ul { list-style: none; margin: 0; padding: 0; }
.title { flex: none; height: 18px; background: #0a246a; color: #fff; display: flex; align-items: center; padding: 0 2px; }
.title h1 { margin: 0 auto 0 2px; font: bold 12px/18px "Liberation Mono", "Noto Sans CJK SC", monospace; }
.winbtns { display: flex; gap: 1px; }
.viewer .winbtns button { width: 15px; height: 13px; background: #d4d0c8; border: 1px solid; border-color: #fff #404040 #404040 #fff; display: grid; place-items: center; }
.winbtns button:last-child { margin-left: 2px; }
.winbtns svg { width: 10px; height: 10px; }
.shot { flex: 1; min-height: 0; margin: 24px 3px 0; border: 1px solid #000; background: #d4d0c8; display: flex; flex-direction: column; overflow: hidden; }
.row { flex: none; height: 26px; display: flex; }
.row.top { height: 29px; border-bottom: 1px solid #808080; }
.band { display: flex; align-items: center; min-width: 0; border-top: 1px solid #fff; border-bottom: 1px solid #808080; border-right: 1px solid #808080; padding-right: 3px; }
.band.file { flex: none; width: 148px; padding-right: 0; }
.band.main { flex: none; width: 618px; padding-right: 0; }
.band.grow { flex: 1; padding-right: 0; overflow: hidden; }
.band.grow :deep(.tb-more) { padding-right: 0; }
.band.pick { flex: none; width: 604px; }
.band.snap { flex: none; width: 211px; }
.band.point { flex: none; width: 264px; }
.work { flex: 1; min-height: 0; display: flex; }
.nav { flex: none; width: 117px; display: flex; flex-direction: column; padding-bottom: 5px; }
.cap { flex: none; height: 16px; display: flex; align-items: center; border: 1px solid #a5a29b; font-size: 13px; overflow: hidden; padding-right: 1px; gap: 2px; }
.cap .clip { flex: 1; white-space: nowrap; min-width: 0; }
.cap.blue { background: #0054e3; border-color: #0054e3; color: #fff; margin-top: 1px; }
.cap.blue .clip { margin-left: -5px; }
.viewer .navbtn { height: 22px; flex: none; border: 1px solid; border-color: #fff #808080 #808080 #fff; }
.fold { flex: none; height: 27px; display: flex; align-items: center; gap: 7px; padding-left: 2px; border: 1px solid; border-color: #fff #808080 #808080 #fff; }
.treebox { flex: 1; min-height: 0; background: #fff; border-top: 2px solid #606060; border-right: 2px solid #d4d0c8; overflow: hidden; }
.tree { position: relative; }
.tree::before { content: ""; position: absolute; left: 10px; top: 8px; bottom: 8px; border-left: 1px dotted #808080; }
.node { display: flex; align-items: center; height: 16px; padding-left: 6px; white-space: nowrap; position: relative; }
.node span { margin-left: 5px; }
.exp { flex: none; width: 9px; height: 9px; border: 1px solid #808080; background: linear-gradient(#000, #000) center / 5px 1px no-repeat #fff; }
.exp.plus { background: linear-gradient(#000, #000) center / 5px 1px no-repeat, linear-gradient(#000, #000) center / 1px 5px no-repeat #fff; }
.dots { width: 6px; border-top: 1px dotted #808080; }
.leaf { display: flex; align-items: center; height: 16px; padding-left: 40px; white-space: nowrap; position: relative; }
.leaf::before { content: ""; position: absolute; left: 29px; top: 0; height: 8px; width: 11px; border-left: 1px dotted #808080; border-bottom: 1px dotted #808080; }
.leaf:not(:last-child)::after { content: ""; position: absolute; left: 29px; top: 8px; height: 8px; border-left: 1px dotted #808080; }
.leaf span { margin-left: 2px; padding: 0 2px; }
.leaf .active { background: #d4d0c8; }
.leaf .sel { background: #0a246a; color: #fff; }
.hscroll { flex: none; height: 16px; display: flex; margin-right: 2px; background: #eceae6; }
.viewer .hscroll button, .thumb { border: 1px solid; border-color: #fff #404040 #404040 #fff; background: #d4d0c8; }
.hscroll button { width: 15px; display: grid; place-items: center; }
.thumb { width: 72px; }
.track { flex: 1; }
.tri.left { border: 4px solid transparent; border-right-color: #000; border-left: 0; }
.tri.right { border: 4px solid transparent; border-left-color: #000; border-right: 0; }
.side { flex: none; width: 288px; margin-left: 4px; padding-right: 4px; display: flex; flex-direction: column; }
.side > .cap { padding-right: 0; }
.partbar { flex: none; height: 27px; display: flex; align-items: center; padding-left: 2px; border-bottom: 1px solid #808080; }
.find { flex: none; display: flex; height: 24px; background: #fff; margin-left: 2px; }
.find input { flex: 1; min-width: 0; border: 1px solid; border-color: #404040 #d4d0c8 #d4d0c8 #404040; padding: 0 1px 4px; }
.find input::placeholder { color: #808080; }
.find button { width: 25px; display: grid; place-items: center; }
.parts { flex: 1; min-height: 0; background: #fff; border-top: 2px solid #606060; border-left: 1px solid #606060; margin: 0 0 6px 2px; }
.parts .node { padding-left: 7px; height: 17px; }
.parts .node .ico { margin-left: 7px; }
.parts .node span { margin-left: 4px; }
.parts .leaf::before, .parts .leaf::after { left: 30px; }
.parts .leaf span { margin-left: 4px; }
.propbox { flex: none; height: 355px; overflow: hidden; margin: 1px 1px 0 2px; background: #fff; border-top: 2px solid #606060; border-left: 1px solid #606060; }
.props { border-collapse: separate; border-spacing: 0; table-layout: fixed; width: 100%; padding-right: 1px; }
.props th, .props td { height: 19px; padding: 0 2px; border-right: 1px solid #b5b5b5; border-bottom: 1px solid #b5b5b5; white-space: nowrap; line-height: 16px; overflow: hidden; font-weight: normal; text-align: left; }
.props thead th { height: 23px; text-align: center; background: linear-gradient(#fff, #d9d6d2); }
.props .num { width: 21px; text-align: center; padding: 0; background: linear-gradient(90deg, #f6f5f3, #dedbd7); }
.props th.name { width: 121px; padding: 0; }
.props td.name { padding-left: 20px; padding-right: 0; }
.props thead .hot, .grid thead .hot { background: linear-gradient(#fcd896, #f3bf5c); }
.props .cur .num { background: #ffcd7d; }
.props .cur .name { background: #0a246a; color: #fff; }
.props .cur td:last-child { background: #d9dcea; }
.props .key .name { color: #00f; }
.props .group td { color: #808080; }
.props .group td.name { padding-left: 3px; }
.props .group .exp { display: inline-block; margin-right: 8px; }
.right { flex: 1; min-width: 0; display: flex; flex-direction: column; }
.canvas { flex: 1; min-height: 0; background: #000; overflow: hidden; }
.canvas svg { width: 100%; height: 100%; display: block; }
.cad { font: 20px "Open Sans", sans-serif; fill: #d8d8d8; }
.cad.big { font-size: 21px; }
.bub { font: 17px "Open Sans", sans-serif; fill: #b050a8; text-anchor: middle; }
.bub.pale { fill: #d8b8e0; }
label { display: flex; align-items: center; white-space: nowrap; }
.dis { color: #8a8782; text-shadow: 1px 1px #fff; margin-left: 2px; }
.spin { display: flex; align-items: center; width: 56px; height: 17px; margin: 0 1px; border: 1px solid; border-color: #808080 #fff #fff #808080; outline: 1px solid #e8e6e2; }
.spin.long { width: 66px; }
.viewer .spin input { flex: 1; min-width: 0; border: 0; background: none; text-align: right; padding: 0 9px 0 0; color: #8a8782; }
.ud { width: 9px; height: 12px; flex: none; position: relative; }
.ud::before, .ud::after { content: ""; position: absolute; left: 1px; border: 3px solid transparent; }
.ud::before { top: 1px; border-top: 0; border-bottom-color: #808080; }
.ud::after { bottom: 1px; border-bottom: 0; border-top-color: #808080; }
.chk input { appearance: none; width: 11px; height: 11px; margin: 0 9px 0 2px; background: #fff; border: 1px solid #606060; }
.dock { flex: none; display: flex; height: 160px; }
.gutter { flex: none; width: 13px; padding: 4px 1px 0; display: flex; flex-direction: column; align-items: center; }
.viewer .gutter button { width: 11px; height: 11px; border: 1px solid; border-color: #fff #404040 #404040 #fff; display: grid; place-items: center; }
.gutter svg { width: 9px; height: 9px; }
.gutter span { flex: 1; width: 6px; border: solid #fff; border-width: 0 2px; outline: 1px solid #b0ada6; margin-top: 2px; }
.sheet { flex: 1; min-width: 0; display: flex; flex-direction: column; }
.rowbar { flex: none; height: 29px; display: flex; align-items: center; }
.total { margin-left: 9px; }
.gridbox { flex: 1; min-height: 0; background: #fff; border-top: 2px solid #404040; border-left: 1px solid #404040; position: relative; overflow: hidden; }
.grid { width: 100%; table-layout: fixed; border-collapse: separate; border-spacing: 0; }
.grid th, .grid td { padding: 0 2px; border-right: 1px solid #b5b5b5; border-bottom: 1px solid #b5b5b5; white-space: nowrap; overflow: hidden; font-weight: normal; text-align: left; }
.grid th:last-child, .grid td:last-child { padding: 0 0 0 1px; border-right: 0; }
.grid thead th { height: 18px; line-height: 17px; padding: 0; text-align: center; background: linear-gradient(#fff, #d9d6d2); border-bottom: 0; }
.grid tbody th { text-align: center; padding-right: 8px; background: linear-gradient(#f6f5f3, #d9d6d2); }
.grid tbody .cur { background: #ffcd7d; color: #fff; }
.grid tbody td:nth-child(2) { border-right-color: #000; }
.g td { background: #ccffdc; }
.r1 { height: 34px; }
.r2 { height: 29px; }
.r3 { height: 19px; }
.g .cell { background: #aedbc8; }
.grid .mid { text-align: center; }
.grid .shape { padding: 0; }
.shape svg { display: block; width: 200px; }
.r1 .shape svg { height: 33px; }
.r2 .shape svg { height: 28px; }
.shape text { font: 12px "Liberation Serif", serif; }
.shape .red { fill: #d01010; }
.c33 { width: 33px; } .c73 { width: 73px; } .c56 { width: 56px; } .c36 { width: 36px; } .c201 { width: 201px; } .c166 { width: 166px; } .c156 { width: 156px; } .c61 { width: 61px; } .c38 { width: 38px; } .c49 { width: 49px; } .c62 { width: 62px; }
.pointer { position: absolute; left: 537px; top: 40px; width: 50px; height: 80px; }
.foot { flex: none; height: 61px; display: flex; justify-content: center; align-items: flex-start; padding-top: 33px; border-bottom: 2px solid #d4d0c8; }
.fgroup { display: flex; }
.fgroup + .fgroup { border-left: 1px solid #808080; margin-left: 4px; padding-left: 3px; }
.fgroup button { width: 24px; height: 18px; display: grid; place-items: center; }
</style>
